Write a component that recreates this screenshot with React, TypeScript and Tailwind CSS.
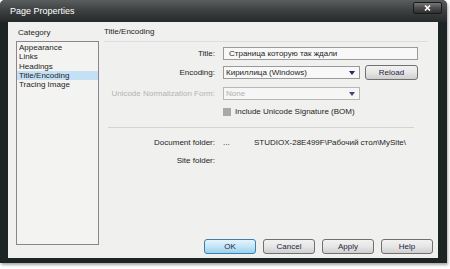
import React from "react";

const categories = ["Appearance", "Links", "Headings", "Title/Encoding", "Tracing Image"];

function Btn({ label, primary }: { label: string; primary?: boolean }) {
  return (
    <button
      className={
        primary
          ? "w-[52px] h-[15px] rounded-[3px] border border-[#3c7fb1] bg-gradient-to-b from-[#e5f4fc] via-[#c4e5f6] to-[#98d1ef] text-[8px] leading-none text-[#1e1e3c]"
          : "w-[52px] h-[15px] rounded-[3px] border border-[#707070] bg-gradient-to-b from-[#f2f2f2] via-[#e6e6e6] to-[#cfcfcf] text-[8px] leading-none text-[#1e1e3c]"
      }
    >
      {label}
    </button>
  );
}

function Arrow({ dim }: { dim?: boolean }) {
  return (
    <svg width="6" height="4" viewBox="0 0 6 4" className="shrink-0">
      <path d="M0 0 L6 0 L3 4 Z" fill={dim ? "#3a4a78" : "#1c2a5c"} />
    </svg>
  );
}

export default function App() {
  return (
    <div
      className="w-[450px] h-[269px] bg-white overflow-hidden"
      style={{ fontFamily: '"Liberation Sans", Arial, sans-serif' }}
    >
      <div className="w-[447px] h-[263px] rounded-t-[5px] bg-[#1d2524] flex flex-col shadow-[1px_2px_3px_rgba(0,0,0,0.35)]">
        {/* title bar */}
        <div className="h-[22px] flex items-start rounded-t-[5px] bg-gradient-to-b from-[#5b5e5e] via-[#3c3f3f] to-[#262a2a]">
          <span className="mt-[6px] ml-[10px] text-[9px] leading-[11px] text-white">Page Properties</span>
          <div className="ml-auto mr-[5px] mt-[2px] w-[29px] h-[12px] rounded-[2px] border border-[#1a1a1a] bg-gradient-to-b from-[#777] via-[#4b4b4b] to-[#2e2e2e] flex items-center justify-center">
            <svg width="7" height="6" viewBox="0 0 7 6">
              <path d="M1 0.5 L6 5.5 M6 0.5 L1 5.5" stroke="#fff" strokeWidth="1.6" />
            </svg>
          </div>
        </div>

        {/* body */}
        <div className="flex-1 pl-[8px] pr-[9px] pb-[5px] flex">
          <div className="flex-1 bg-[#f0f0ee] flex pl-[8px] pr-[5px] text-[8px] text-[#1e1e1e]">
            {/* left column */}
            <div className="w-[83px] flex flex-col">
              <div className="h-[19px] pt-[6px] pl-[2px] leading-[10px]">Category</div>
              <div className="h-[204px] border border-[#8e8490] bg-[#f3f3f1] pt-[1px]">
                {categories.map((c) => (
                  <div
                    key={c}
                    className={
                      c === "Title/Encoding"
                        ? "h-[9.33px] leading-[9.33px] pl-[2px] bg-[#c4e0f4]"
                        : "h-[9.33px] leading-[9.33px] pl-[2px]"
                    }
                  >
                    {c}
                  </div>
                ))}
              </div>
            </div>

            {/* right column */}
            <div className="ml-[5px] flex-1 flex flex-col pt-[4px]">
              <div className="h-[16px] mr-[5px] border-b border-[#d6dee8] leading-[12px]">Title/Encoding</div>

              <div className="mt-[5px] h-[13px] flex items-center">
                <div className="w-[111px] text-right">Title:</div>
                <div className="ml-[8px] w-[195px] h-[13px] border border-[#9a9a9a] bg-[#f8f8f8] flex items-center pl-[5px]">
                  Страница которую так ждали
                </div>
              </div>

              <div className="mt-[5px] h-[15px] flex items-center">
                <div className="w-[111px] text-right">Encoding:</div>
                <div className="ml-[8px] w-[137px] h-[13px] border border-[#9a9a9a] bg-[#f8f8f8] flex items-center pl-[2px] pr-[4px]">
                  <span className="flex-1">Кириллица (Windows)</span>
                  <Arrow />
                </div>
                <button className="ml-[5px] w-[53px] h-[15px] rounded-[3px] border border-[#707070] bg-gradient-to-b from-[#f2f2f2] via-[#e6e6e6] to-[#cfcfcf] text-[8px] leading-none text-[#1e1e3c]">
                  Reload
                </button>
              </div>

              <div className="mt-[7px] h-[13px] flex items-center">
                <div className="w-[111px] text-right text-[#b4b4b4]">Unicode Normalization Form:</div>
                <div className="ml-[8px] w-[137px] h-[13px] border border-[#b8b8b8] bg-[#f6f6f6] flex items-center pl-[2px] pr-[4px] text-[#b0b0b0]">
                  <span className="flex-1">None</span>
                  <Arrow dim />
                </div>
              </div>

              <div className="mt-[5px] h-[13px] flex items-center">
                <div className="ml-[119px] w-[8px] h-[8px] bg-[#a9a9a9]" />
                <span className="ml-[4px]">Include Unicode Signature (BOM)</span>
              </div>

              <div className="mt-[9px] ml-[4px] w-[306px] border-t border-[#d4d4d4]" />

              <div className="mt-[9px] h-[12px] flex items-center">
                <div className="w-[111px] text-right">Document folder:</div>
                <span className="ml-[8px] w-[31px]">...</span>
                <span>STUDIOX-28E499F\Рабочий стол\MySite\</span>
              </div>

              <div className="mt-[6px] h-[12px] flex items-center">
                <div className="w-[111px] text-right">Site folder:</div>
              </div>

              <div className="flex-1" />

              <div className="mb-[4px] flex justify-end gap-[7px]">
                <Btn label="OK" primary />
                <Btn label="Cancel" />
                <Btn label="Apply" />
                <Btn label="Help" />
              </div>
            </div>
          </div>
        </div>
      </div>
    </div>
  );
}
